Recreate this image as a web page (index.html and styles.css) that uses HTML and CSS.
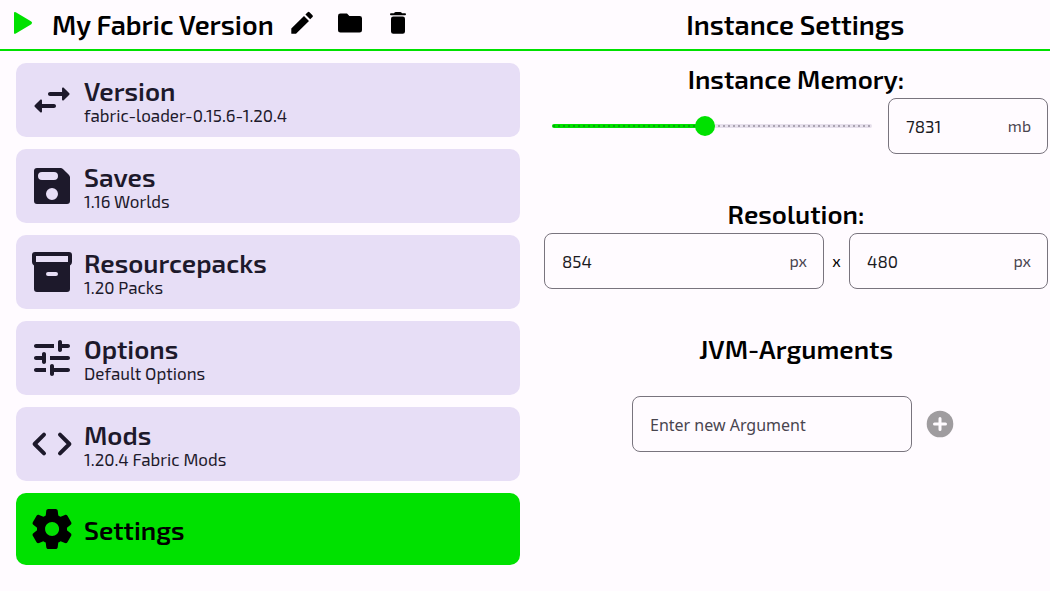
FILE: index.html
```html
<!DOCTYPE html>
<html lang="en">
<head>
<meta charset="utf-8">
<meta name="viewport" content="width=device-width, initial-scale=1">
<title>My Fabric Version</title>
<link rel="stylesheet" href="styles.css">
</head>
<body>
<header class="topbar">
  <div class="instance">
    <button class="icon-button play" type="button" aria-label="Play"><svg viewBox="0 0 20 24"><path d="M1 2.200Q1 .2 2.800 1.300L18.300 10.600Q20 12 18.300 13.200L2.800 22.500Q1 23.600 1 21.500Z"/></svg></button>
    <h1 class="title title-bar">My Fabric Version</h1>
    <div class="actions">
      <button class="icon-button" type="button" aria-label="Rename"><svg viewBox="0 0 24 24"><path d="M1.300 22.200v-4.600L14 4.900l5 5L6 22.700H1.800Q1.300 22.700 1.300 22.200ZM15.400 3.500l2.300-2.300q.9-.8 1.800 0l3 3q.9.900 0 1.800l-2.300 2.300Z"/></svg></button>
      <button class="icon-button" type="button" aria-label="Open folder"><svg viewBox="0 0 24 24"><path d="M2.400 2.500H9l2.400 2.400h10.200q2.400 0 2.400 2.400v11.900q0 2.400-2.400 2.400H2.400Q0 21.600 0 19.200V4.900Q0 2.500 2.400 2.500Z"/></svg></button>
      <button class="icon-button" type="button" aria-label="Delete"><svg viewBox="0 0 24 24"><path d="M4.900 2.200H8q.6-1.200 2-1.200h4q1.400 0 2 1.200h3.100q.9 0 .9 1t-.9 1H4.900Q4 4.200 4 3.200t.9-1ZM5 7.800Q5 5.500 7.300 5.500h9.400Q19 5.500 19 7.800v12.600q0 2.400-2.300 2.400H7.300Q5 22.800 5 20.400Z"/></svg></button>
    </div>
  </div>
  <h2 class="title title-bar">Instance Settings</h2>
</header>
<main class="content">
  <nav class="menu" aria-label="Instance">
    <button class="card" type="button">
      <svg class="card-icon" viewBox="0 0 24 24"><path d="M6.140 11.860l-2.780 2.790c-.2.200-.2.510 0 .710l2.780 2.790c.31.310.850.090.850-.36V16H13c.550 0 1-.450 1-1s-.450-1-1-1H6.990v-1.790c0-.450-.540-.670-.850-.350zm14.510-3.210l-2.780-2.790c-.31-.310-.850-.090-.850.360V8H11c-.550 0-1 .450-1 1s.450 1 1 1h6.010v1.790c0 .450.540.670.850.350l2.780-2.790c.2-.190.2-.510.010-.700z"/></svg>
      <span class="card-text"><span class="card-name">Version</span><span class="card-note">fabric-loader-0.15.6-1.20.4</span></span>
    </button>
    <button class="card" type="button">
      <svg class="card-icon" viewBox="0 0 24 24"><path fill-rule="evenodd" d="M4.500 3H16.200Q17 3 17.600 3.600L20.400 6.400Q21 7 21 7.800V19.500q0 1.500-1.500 1.500H4.500q-1.500 0-1.500-1.500V4.500q0-1.500 1.500-1.500ZM7 5a2 2 0 0 0 0 4h6a2 2 0 0 0 0-4ZM12 13a3 3 0 1 0 0 6a3 3 0 1 0 0-6Z"/></svg>
      <span class="card-text"><span class="card-name">Saves</span><span class="card-note">1.16 Worlds</span></span>
    </button>
    <button class="card" type="button">
      <svg class="card-icon" viewBox="0 0 24 24"><path fill-rule="evenodd" d="M3.500 2H20.500q1.500 0 1.500 1.500V7q0 1.200-1 1.700V20.500q0 1.500-1.500 1.500H4.500q-1.500 0-1.500-1.500V8.700Q2 8.200 2 7V3.500q0-1.500 1.500-1.500ZM4 4V7H20V4ZM10 12a1 1 0 0 0 0 2h4a1 1 0 0 0 0-2Z"/></svg>
      <span class="card-text"><span class="card-name">Resourcepacks</span><span class="card-note">1.20 Packs</span></span>
    </button>
    <button class="card" type="button">
      <svg class="card-icon" viewBox="0 0 24 24"><path d="M3 18c0 .550.450 1 1 1h5v-2H4c-.550 0-1 .450-1 1zM3 6c0 .550.450 1 1 1h9V5H4c-.550 0-1 .450-1 1zm10 14v-1h7c.550 0 1-.450 1-1s-.450-1-1-1h-7v-1c0-.550-.450-1-1-1s-1 .450-1 1v4c0 .550.450 1 1 1s1-.450 1-1zM7 10v1H4c-.550 0-1 .450-1 1s.450 1 1 1h3v1c0 .550.450 1 1 1s1-.450 1-1v-4c0-.550-.450-1-1-1s-1 .450-1 1zm14 2c0-.550-.450-1-1-1h-9v2h9c.550 0 1-.450 1-1zm-5-3c.550 0 1-.450 1-1V7h3c.550 0 1-.450 1-1s-.450-1-1-1h-3V4c0-.550-.450-1-1-1s-1 .450-1 1v4c0 .550.450 1 1 1z"/></svg>
      <span class="card-text"><span class="card-name">Options</span><span class="card-note">Default Options</span></span>
    </button>
    <button class="card" type="button">
      <svg class="card-icon" viewBox="0 0 24 24"><path class="stroke" d="M8 7.300L3.300 12L8 16.700M16 7.300L20.700 12L16 16.700"/></svg>
      <span class="card-text"><span class="card-name">Mods</span><span class="card-note">1.20.4 Fabric Mods</span></span>
    </button>
    <button class="card card-active" type="button" aria-current="page">
      <svg class="card-icon" viewBox="0 0 24 24"><path d="M19.500 12c0-.230-.010-.450-.030-.680l1.860-1.410c.4-.3.510-.860.260-1.300l-1.870-3.230c-.250-.440-.790-.620-1.250-.420l-2.150.910c-.370-.260-.760-.490-1.170-.680l-.290-2.310C14.800 2.380 14.370 2 13.870 2h-3.730c-.510 0-.940.380-1 .880l-.290 2.310c-.410.190-.8.420-1.170.680l-2.150-.910c-.46-.2-1-.020-1.250.420L2.410 8.620c-.250.440-.140.990.260 1.300l1.860 1.410c-.020.220-.030.440-.030.670s.010.450.030.680l-1.860 1.410c-.4.300-.510.860-.260 1.300l1.870 3.230c.250.440.790.620 1.250.420l2.150-.910c.370.260.760.490 1.170.680l.29 2.310c.060.500.490.880.990.880h3.730c.5 0 .930-.380.990-.880l.29-2.310c.410-.190.8-.420 1.170-.680l2.150.910c.460.200 1 .020 1.250-.420l1.870-3.230c.250-.440.140-.990-.260-1.300l-1.860-1.410c.030-.230.040-.450.040-.680zm-7.460 3.500c-1.930 0-3.500-1.570-3.500-3.500s1.570-3.500 3.500-3.500 3.500 1.570 3.500 3.500-1.570 3.500-3.500 3.500z"/></svg>
      <span class="card-text"><span class="card-name">Settings</span></span>
    </button>
  </nav>
  <div class="settings">
    <section class="section">
      <h3 class="title"><label for="memory">Instance Memory:</label></h3>
      <div class="row">
        <div class="slider-box"><input class="slider" id="memory" type="range" min="0" max="16384" value="7831"></div>
        <div class="field field-small"><input class="field-input" id="memory-mb" type="text" value="7831" aria-label="Memory"><label class="unit" for="memory-mb">mb</label></div>
      </div>
    </section>
    <section class="section">
      <h3 class="title">Resolution:</h3>
      <div class="row">
        <div class="field field-wide"><input class="field-input" id="width" type="text" value="854" aria-label="Width"><label class="unit" for="width">px</label></div>
        <span class="times">x</span>
        <div class="field field-rest"><input class="field-input" id="height" type="text" value="480" aria-label="Height"><label class="unit" for="height">px</label></div>
      </div>
    </section>
    <section class="section">
      <h3 class="title">JVM-Arguments</h3>
      <div class="row row-argument">
        <div class="field field-wide"><input class="field-input" type="text" placeholder="Enter new Argument" aria-label="Enter new Argument"></div>
        <button class="add" type="button" aria-label="Add argument" disabled><svg viewBox="0 0 40 40"><circle cx="20" cy="20" r="13.300"/><path d="M20 14.500v11M14.500 20h11"/></svg></button>
      </div>
    </section>
  </div>
</main>
</body>
</html>
```

FILE: styles.css
```css
* {
  box-sizing: border-box;
}

body {
  margin: 0;
  background: #fffbff;
  color: #000;
  font-family: "Exo 2", "Noto Sans", sans-serif;
  font-size: 16px;
  line-height: 20px;
}

button,
input {
  margin: 0;
  padding: 0;
  border: 0;
  background: none;
  color: inherit;
  font: inherit;
}

svg {
  display: block;
  fill: currentColor;
}

.topbar,
.content {
  display: grid;
  grid-template-columns: minmax(0, 1fr) minmax(0, 1fr);
  column-gap: 24px;
  padding: 0 2px 0 16px;
}

.topbar {
  align-items: center;
  height: 51px;
  padding-left: 13px;
  border-bottom: 2px solid #00e100;
}

.instance {
  display: flex;
  align-items: center;
  gap: 16px;
}

.title {
  margin: 0;
  padding-bottom: 2px;
  font-size: 26px;
  font-weight: 600;
  line-height: 34px;
  text-align: center;
  white-space: nowrap;
}

.title-bar {
  font-size: 27px;
}

.actions {
  display: flex;
  gap: 24px;
}

.icon-button {
  width: 24px;
  height: 24px;
  margin-bottom: 4px;
}

.play {
  width: 23px;
  color: #00e100;
}

.play svg {
  width: 20px;
  height: 24px;
}

.menu {
  display: flex;
  flex-direction: column;
  gap: 12px;
  padding-top: 12px;
}

.card {
  display: flex;
  align-items: center;
  gap: 8px;
  min-height: 74px;
  padding: 0 12px;
  border-radius: 10px;
  background: #e7def6;
  color: #1d192b;
  text-align: left;
}

.card-active {
  min-height: 72px;
  background: #00e100;
  color: #000;
}

.card-icon {
  flex: none;
  width: 48px;
  height: 48px;
}

.stroke {
  fill: none;
  stroke: currentColor;
  stroke-width: 2;
  stroke-linecap: round;
  stroke-linejoin: round;
}

.card-text {
  display: flex;
  flex-direction: column;
  padding-top: 2px;
}

.card-name {
  font-size: 26px;
  font-weight: 600;
  line-height: 28px;
}

.card-note {
  font-size: 17px;
}

.settings {
  display: flex;
  flex-direction: column;
  gap: 43px;
  padding-top: 11px;
}

.row {
  display: flex;
  align-items: center;
}

.row-argument {
  justify-content: center;
  gap: 8px;
  padding-top: 28px;
}

.slider-box {
  flex: 1;
  padding: 0 16px 0 8px;
}

.slider {
  display: block;
  width: 100%;
  height: 20px;
  appearance: none;
}

.slider::-webkit-slider-runnable-track {
  height: 4px;
  border-radius: 2px;
  background:
    repeating-linear-gradient(90deg, transparent 0 1px, rgba(29, 25, 43, 0.3) 1px 3px, transparent 3px 5px) 0 1px / 100% 2px no-repeat,
    linear-gradient(90deg, #00e100 48%, #e7e0ec 48%);
}

.slider::-webkit-slider-thumb {
  width: 20px;
  height: 20px;
  margin-top: -8px;
  border-radius: 50%;
  background: #00e100;
  appearance: none;
}

.field {
  display: flex;
  align-items: center;
  height: 56px;
  padding: 0 16px 0 17px;
  border: 1px solid #79747e;
  border-radius: 8px;
}

.field-small {
  flex: none;
  width: 160px;
}

.field-wide {
  flex: 0 1 280px;
  min-width: 0;
}

.field-rest {
  flex: 1;
  min-width: 0;
}

.field-input {
  flex: 1;
  width: 0;
  min-width: 0;
  height: 100%;
  color: #1c1b1f;
  font-size: 17px;
  outline: none;
}

.field-input::placeholder {
  color: #49454f;
  font-family: "Noto Sans", sans-serif;
  font-size: 16px;
  opacity: 1;
}

.unit {
  color: #49454f;
}

.times {
  flex: none;
  width: 25px;
  text-align: center;
}

.add {
  width: 40px;
  height: 40px;
  color: #9f9c9f;
}

.add path {
  fill: none;
  stroke: #fffbff;
  stroke-width: 3;
  stroke-linecap: round;
}
```
